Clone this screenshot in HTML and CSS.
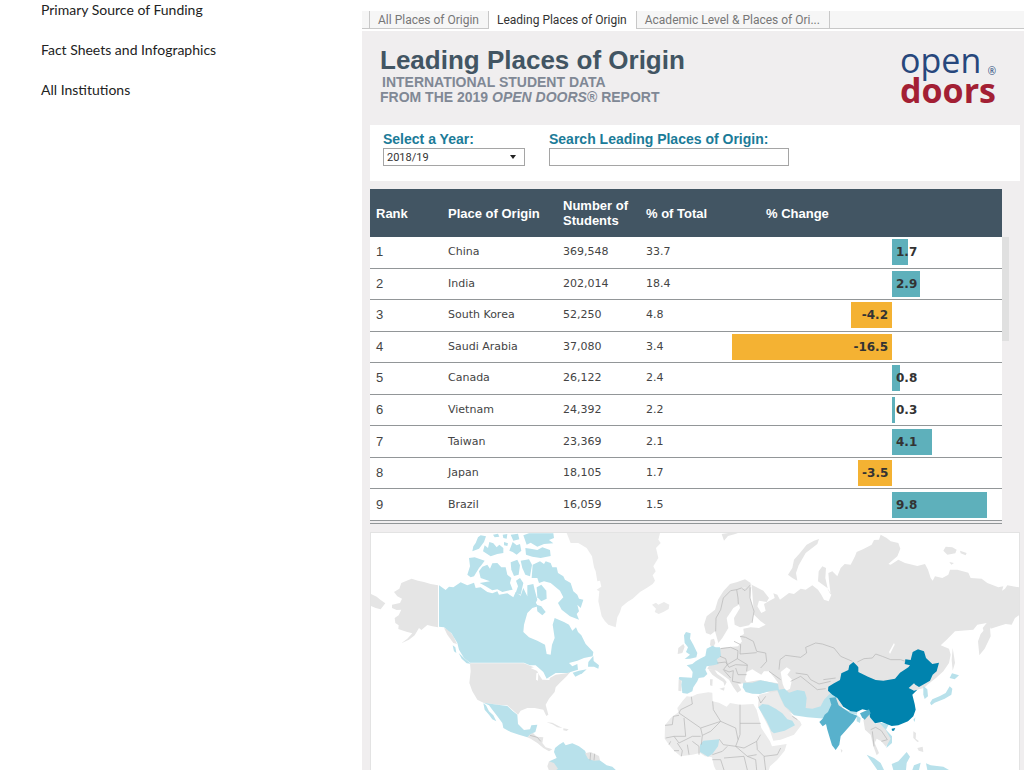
FILE: index.html
```html
<!DOCTYPE html>
<html lang="en">
<head>
    <meta charset="UTF-8">
    <meta name="viewport" content="width=device-width, initial-scale=1.0">
    <title>Leading Places of Origin</title>
    <link rel="stylesheet" href="styles.css">
</head>
<body>
    <div class="page">
        <nav class="sidebar">
            <a href="#">Primary Source of Funding</a>
            <a href="#">Fact Sheets and Infographics</a>
            <a href="#">All Institutions</a>
        </nav>

        <main class="dashboard">
            <div class="tabs">
                <button class="tab" type="button">All Places of Origin</button>
                <button class="tab active" type="button">Leading Places of Origin</button>
                <button class="tab" type="button">Academic Level &amp; Places of Ori...</button>
            </div>

            <div class="panel">
                <header class="heading">
                    <div>
                        <h1>Leading Places of Origin</h1>
                        <p class="subtitle first">INTERNATIONAL STUDENT DATA</p>
                        <p class="subtitle">FROM THE 2019 <em>OPEN DOORS</em>® REPORT</p>
                    </div>
                    <div class="logo">
                        <div class="logo-open">open<span class="reg">®</span></div>
                        <div class="logo-doors">doors</div>
                    </div>
                </header>

                <form class="filters">
                    <div class="field">
                        <label for="year">Select a Year:</label>
                        <div class="select-box">
                            <select id="year">
                                <option>2018/19</option>
                            </select>
                        </div>
                    </div>
                    <div class="field search">
                        <label for="search">Search Leading Places of Origin:</label>
                        <input id="search" type="text">
                    </div>
                </form>

                <div class="table-area">
                    <table>
                        <thead>
                            <tr>
                                <th class="rank">Rank</th>
                                <th class="place">Place of Origin</th>
                                <th class="number">Number of Students</th>
                                <th class="total">% of Total</th>
                                <th class="change">% Change</th>
                            </tr>
                        </thead>
                        <tbody>
                            <tr><td class="rank">1</td><td>China</td><td>369,548</td><td>33.7</td><td class="change"><div class="bar" style="--value: 1.7"><span>1.7</span></div></td></tr>
                            <tr><td class="rank">2</td><td>India</td><td>202,014</td><td>18.4</td><td class="change"><div class="bar" style="--value: 2.9"><span>2.9</span></div></td></tr>
                            <tr><td class="rank">3</td><td>South Korea</td><td>52,250</td><td>4.8</td><td class="change"><div class="bar down" style="--value: 4.2"><span>-4.2</span></div></td></tr>
                            <tr><td class="rank">4</td><td>Saudi Arabia</td><td>37,080</td><td>3.4</td><td class="change"><div class="bar down" style="--value: 16.5"><span>-16.5</span></div></td></tr>
                            <tr><td class="rank">5</td><td>Canada</td><td>26,122</td><td>2.4</td><td class="change"><div class="bar" style="--value: 0.8"><span>0.8</span></div></td></tr>
                            <tr><td class="rank">6</td><td>Vietnam</td><td>24,392</td><td>2.2</td><td class="change"><div class="bar" style="--value: 0.3"><span>0.3</span></div></td></tr>
                            <tr><td class="rank">7</td><td>Taiwan</td><td>23,369</td><td>2.1</td><td class="change"><div class="bar" style="--value: 4.1"><span>4.1</span></div></td></tr>
                            <tr><td class="rank">8</td><td>Japan</td><td>18,105</td><td>1.7</td><td class="change"><div class="bar down" style="--value: 3.5"><span>-3.5</span></div></td></tr>
                            <tr><td class="rank">9</td><td>Brazil</td><td>16,059</td><td>1.5</td><td class="change"><div class="bar" style="--value: 9.8"><span>9.8</span></div></td></tr>
                        </tbody>
                    </table>
                    <div class="scroll-track"><div class="scroll-thumb"></div></div>
                </div>

                <div class="map">
                    <svg viewBox="21 15 1944 711" role="img" aria-label="World map of places of origin">
                        <!-- North America -->
                        <g class="land">
                            <path d="M222,172 L200,168 180,162 162,158 143,152 128,158 112,165 106,182 90,192 100,205 114,212 108,225 84,230 84,240 98,246 112,245 104,262 92,270 94,285 104,292 103,303 118,308 130,312 145,316 130,332 112,346 135,335 152,322 165,300 172,306 190,291 205,295 222,298Z"/>
                            <path d="M240,300 L255,306 268,325 279,348 268,345 250,320Z"/>
                            <path d="M21,198 L38,206 50,216 64,226 50,244 35,240 21,234Z"/>
                            <path d="M318,406 L480,406 500,414 515,420 525,440 535,455 548,455 575,440 608,436 622,428 608,445 590,462 575,478 572,492 555,512 545,530 553,560 547,564 538,545 512,540 490,540 470,548 462,560 445,545 430,532 400,530 358,524 340,515 325,490 316,465 320,430Z"/>
                            <path d="M490,628 L505,613 518,626 538,628 535,645 545,658 565,664 555,670 538,660 520,645 500,632Z"/>
                            <path d="M548,583 L565,584 595,600 580,598 565,589Z"/>
                            <path d="M598,601 L614,604 608,609 598,607Z"/>
                        </g>
                        <g class="light">
                            <path d="M225,172 L245,186 255,176 268,178 290,163 310,172 330,164 335,180 350,178 370,192 385,196 400,190 405,200 430,196 448,208 455,192 470,203 478,180 490,205 505,200 510,215 522,235 505,240 490,255 480,290 478,312 495,328 520,338 543,350 548,378 560,380 564,350 572,330 566,290 572,270 600,282 615,290 625,308 636,298 642,312 652,322 665,348 688,372 686,385 660,390 640,398 615,405 625,415 640,408 642,425 610,435 575,435 548,452 538,432 515,412 498,412 480,404 318,404 300,390 285,365 280,345 262,315 240,298 225,296Z"/>
                            <path d="M673,402 L688,384 689,399 705,412 703,422 690,416 672,416Z"/>
                            <path d="M626,434 L645,428 668,424 655,436 634,446Z"/>
                            <path d="M284,375 L300,390 320,407 308,406 293,392Z"/>
                            <path d="M266,352 L274,358 277,375 270,370Z"/>
                            <path d="M506,110 L528,100 540,108 545,100 560,105 565,118 578,118 582,135 598,145 603,155 620,165 628,190 640,200 645,212 658,215 650,240 640,230 645,250 638,258 645,275 618,265 593,245 582,225 598,208 588,188 560,165 540,160 525,165 520,150 503,150Z"/>
                            <path d="M518,178 L532,170 547,188 548,212 532,220 520,208Z"/>
                            <path d="M490,172 L508,168 512,185 520,215 510,235 500,215 490,210Z"/>
                            <path d="M518,230 L532,235 545,252 535,262 520,250Z"/>
                            <path d="M345,130 L355,116 370,110 378,122 385,106 400,105 412,118 425,118 430,140 442,150 438,165 446,185 430,188 415,192 400,184 385,187 365,175 347,165 378,160 350,150Z"/>
                            <path d="M315,90 L332,88 345,92 362,98 352,112 345,120 330,145 320,148 310,140 318,115Z"/>
                            <path d="M325,70 L328,55 335,45 342,28 350,22 366,25 360,42 345,62Z"/>
                            <path d="M357,70 L362,52 372,60 376,42 388,46 398,58 406,50 418,60 418,75 400,78 380,85Z"/>
                            <path d="M387,20 L402,17 406,26 392,28Z M416,20 L430,18 428,32 418,30Z M440,20 L462,17 466,34 448,38Z M420,42 L432,46 430,54 420,52Z"/>
                            <path d="M436,68 L446,42 458,52 468,48 472,68 458,80 446,72Z"/>
                            <path d="M440,103 L460,95 468,112 464,140 450,144 442,125Z"/>
                            <path d="M470,98 L495,94 504,110 498,145 484,140 475,120Z"/>
                            <path d="M456,158 L468,150 478,165 470,200 455,195 462,175Z"/>
                            <path d="M484,60 L500,62 520,66 535,58 558,66 560,84 530,90 505,86 486,80Z"/>
                            <path d="M478,22 L495,16 568,16 570,30 555,36 568,46 540,48 520,56 500,44 488,50Z"/>
                            <path d="M358,524 L400,530 430,534 445,548 460,560 462,588 480,606 498,604 502,592 520,590 514,612 500,618 490,628 465,620 440,612 418,600 415,585 400,565 385,545 375,532Z"/>
                            <path d="M358,526 L366,532 375,550 388,562 397,580 385,574 375,560 362,545Z"/>
                            <path d="M573,660 L585,650 598,642 605,652 625,646 645,655 663,668 670,685 705,695 728,712 745,716 770,740 555,740 562,712 556,700 578,690 570,672Z"/>
                        </g>
                        <g class="water">
                            <path d="M500,420 L515,416 530,430 518,428Z M517,436 L523,434 522,458 516,455Z M528,432 L538,440 536,450Z M540,456 L558,450 556,456Z"/>
                        </g>
                        <path class="land" d="M663,676 L680,672 705,684 708,697 690,698 672,692Z M555,700 L570,705 582,722 560,740 550,715Z"/>

                        <!-- Greenland and the North Atlantic -->
                        <g class="pale">
                            <path d="M608,15 L888,15 883,35 890,45 876,60 883,90 868,115 875,130 866,142 873,158 866,168 848,180 828,192 806,212 790,222 773,236 768,252 760,268 755,298 733,290 722,278 713,265 703,220 706,190 698,185 712,176 708,158 700,160 695,130 690,118 684,85 668,60 643,45 620,45Z"/>
                            <path d="M864,230 L876,224 883,230 900,222 916,230 914,243 898,252 884,258 872,252 876,242Z"/>
                        </g>

                        <!-- Russia, Eastern Europe and Central Asia -->
                        <g class="land">
                            <path d="M1163,170 L1198,188 1215,210 1208,222 1185,218 1180,235 1192,255 1205,248 1200,228 1210,222 1232,210 1228,196 1240,200 1248,215 1275,195 1290,198 1310,182 1325,185 1345,172 1362,185 1372,200 1380,215 1394,220 1402,200 1390,180 1362,160 1364,130 1375,115 1386,120 1384,150 1392,185 1400,200 1395,158 1393,135 1405,130 1420,145 1430,120 1442,108 1460,110 1473,85 1478,72 1500,62 1523,50 1530,36 1545,35 1550,20 1568,30 1580,40 1603,45 1609,62 1600,85 1573,108 1580,110 1603,95 1623,105 1660,114 1683,108 1692,125 1700,150 1706,158 1713,145 1735,150 1753,140 1758,125 1780,125 1813,134 1820,150 1853,152 1870,165 1903,178 1918,175 1914,188 1923,182 1930,172 1965,178 1965,262 1953,270 1943,290 1925,288 1903,295 1880,302 1876,292 1860,312 1856,300 1868,285 1840,290 1828,305 1773,310 1748,335 1730,352 1755,362 1760,380 1755,405 1738,430 1716,450 1690,470 1680,480 1600,500 1473,530 1380,550 1340,562 1290,560 1255,540 1240,500 1163,480 1140,466 1122,468 1132,486 1120,494 1108,478 1095,455 1075,440 1058,428 1030,422 1040,405 1068,360 1090,358 1122,355 1134,340 1128,325 1140,318 1138,302 1160,298 1185,300 1205,290 1190,280 1170,260Z"/>
                            <path d="M1020,290 L1028,265 1053,245 1062,215 1078,190 1098,168 1120,162 1143,154 1160,165 1158,178 1132,180 1122,210 1128,228 1108,240 1088,270 1093,300 1075,330 1063,345 1053,310 1040,320 1026,315Z"/>
                            <path d="M1118,205 L1120,182 1143,180 1155,168 1162,178 1158,210 1170,250 1165,280 1155,292 1128,298 1112,290 1110,270 1128,240Z"/>
                            <path d="M1038,352 L1040,335 1050,332 1054,345 1048,358Z"/>
                            <path d="M1365,33 L1350,38 1328,50 1308,75 1290,95 1285,120 1272,140 1285,150 1300,158 1296,135 1304,112 1325,75 1360,48Z"/>
                            <path d="M1738,68 L1745,56 1765,58 1778,65 1774,76 1750,80Z M1788,68 L1808,75 1805,82 1790,76Z M1756,102 L1770,105 1762,110Z"/>
                            <path d="M1884,275 L1878,300 1880,325 1862,362 1846,382 1842,340 1850,318 1870,295Z"/>
                            <path d="M1766,360 L1770,385 1773,405 1766,428 1763,395Z"/>
                            <path d="M1033,424 L1050,424 1060,438 1080,452 1088,462 1082,474 1078,462 1062,452 1045,440Z"/>
                            <path d="M1066,482 L1082,478 1080,488Z M1038,454 L1046,454 1045,474 1038,472Z"/>
                            <path d="M943,360 L958,348 962,356 955,375 941,378Z M944,455 L953,456 952,490 943,488Z"/>
                            <path d="M1073,18 L1100,14 1122,16 1092,24 1080,38Z"/>
                        </g>

                        <!-- Africa and the Middle East -->
                        <g class="pale">
                            <path d="M943,553 L940,540 955,520 968,505 982,506 1000,498 1033,493 1045,494 1046,520 1065,524 1088,536 1098,525 1128,530 1168,528 1178,545 1183,565 1192,600 1218,640 1224,655 1268,648 1262,668 1240,695 1218,715 1210,740 1063,740 1050,715 1044,688 1023,685 1008,675 985,680 950,685 930,668 915,650 902,632 903,592 920,570Z"/>
                            <path d="M1185,500 L1240,490 1258,530 1285,562 1308,580 1313,590 1290,620 1250,635 1228,638 1215,600 1182,535Z"/>
                        </g>
                        <g class="water">
                            <path d="M1143,455 L1148,432 1165,424 1178,432 1192,440 1200,430 1215,430 1230,448 1243,466 1215,462 1185,456 1148,463Z"/>
                            <path d="M1250,432 L1268,418 1280,426 1270,440 1284,455 1278,482 1265,490 1256,468Z"/>
                            <path d="M1575,372 L1590,345 1592,350 1578,378Z"/>
                        </g>
                        <g class="light">
                            <path d="M960,322 L966,312 980,316 978,332 988,350 1000,375 997,388 978,392 962,393 978,380 966,372 972,358 962,345Z"/>
                            <path d="M968,412 L985,408 995,400 1008,392 1024,384 1028,362 1045,353 1055,358 1068,358 1071,385 1058,394 1064,408 1048,412 1028,415 1024,425 1030,438 1020,448 1004,450 1000,460 988,478 985,490 970,497 955,495 952,470 954,458 944,454 946,447 984,449 986,432 978,420Z"/>
                            <path d="M1138,464 L1165,464 1190,457 1220,463 1242,468 1245,486 1215,490 1188,498 1165,497 1145,492 1136,478Z"/>
                            <path d="M1240,486 L1262,482 1275,494 1300,486 1322,490 1328,510 1325,540 1345,542 1370,535 1380,515 1400,495 1420,508 1402,530 1400,552 1385,572 1330,568 1290,562 1275,545 1262,535 1250,510Z"/>
                            <path d="M1183,538 L1195,528 1213,530 1235,542 1255,556 1270,574 1285,578 1293,592 1262,608 1230,616 1222,610 1208,580Z"/>
                            <path d="M1008,650 L1018,638 1066,634 1062,655 1045,678 1032,686 1022,680 1008,672Z"/>
                            <path d="M1425,535 L1452,548 1480,552 1478,560 1440,552Z M1478,562 L1490,570 1488,585 1478,580Z"/>
                            <path d="M1678,474 L1690,484 1692,505 1682,513 1678,500Z"/>
                            <path d="M1698,525 L1705,514 1728,504 1745,495 1757,475 1765,482 1762,500 1742,512 1712,524 1702,532Z M1757,450 L1764,436 1785,442 1772,454Z"/>
                            <path d="M1546,584 L1575,588 1566,605 1584,625 1584,645 1567,660 1572,638 1555,602Z"/>
                            <path d="M1508,680 L1530,690 1550,705 1560,726 1540,726Z M1583,708 L1603,700 1628,672 1638,686 1628,705 1626,726 1588,726Z M1650,712 L1670,704 1665,726 1645,726Z M1686,706 L1700,712 1738,716 1755,726 1690,726Z"/>
                            <path d="M1648,575 L1654,568 1652,582Z"/>
                        </g>
                        <g class="land">
                            <path d="M1498,575 L1515,560 1533,587 1546,584 1565,605 1580,632 1566,656 1552,640 1538,632 1532,645 1545,675 1538,682 1528,655 1520,620 1503,605Z"/>
                            <path d="M1648,610 L1656,615 1655,632 1665,640 1660,642 1648,630Z M1660,660 L1676,656 1678,672 1664,668Z M1430,662 L1436,668 1432,674Z"/>
                        </g>
                        <path class="china" d="M1393,476 L1410,466 1428,456 1432,436 1453,426 1456,412 1468,402 1478,412 1483,418 1483,432 1512,446 1535,456 1558,458 1593,452 1608,434 1633,418 1638,412 1622,408 1624,394 1640,396 1646,372 1662,364 1680,370 1686,390 1705,408 1725,404 1718,430 1706,440 1698,458 1665,477 1654,470 1650,466 1634,480 1650,488 1660,485 1645,500 1652,528 1655,545 1648,565 1632,580 1603,592 1583,594 1553,582 1533,586 1518,568 1515,548 1495,544 1478,552 1460,550 1438,536 1420,510 1405,500 1392,488Z"/>
                        <path class="china" d="M1583,602 L1594,600 1590,608 1584,608Z"/>
                        <path class="india" d="M1396,510 L1415,508 1424,532 1458,555 1480,563 1470,580 1452,600 1430,625 1426,650 1415,666 1404,652 1390,605 1386,588 1376,595 1366,582 1376,572 1382,560 1392,552 1402,530Z"/>
                        <path class="india" d="M1488,556 L1515,544 1520,556 1502,575 1494,568Z"/>

                        <!-- Country borders -->
                        <g class="borders">
                            <path d="M1055,310 L1056,270 1070,245 1078,210 1100,188 1118,185 1122,210 1123,228 M1118,185 L1132,180 1143,188 1160,170 M1158,178 L1158,210 1170,250 1164,285"/>
                            <path d="M1128,325 L1145,328 1168,340 1178,370 1205,375 1208,400 1190,420 M1110,340 L1130,350 1128,378 1178,374 M1070,362 L1100,358 1122,368 1120,392 1150,410 1148,430 M1068,385 L1085,392 1090,410 1120,392 M1060,405 L1085,402 1095,418 1115,410 1150,412 M1080,425 L1095,432 1108,428 1105,460 1130,465 M1090,410 L1078,425 1100,450 M1115,420 L1122,440 1148,440"/>
                            <path d="M1245,425 L1248,395 1265,382 1310,388 1328,375 1325,358 1355,345 1375,348 1410,360 1430,385 1465,400 M1295,435 L1330,440 1340,455 1365,468 1400,460 M1280,460 L1310,445 1360,485 1385,482 M1378,455 L1415,450"/>
                            <path d="M1480,402 L1500,392 1525,390 1535,378 1555,385 1580,395 1610,395 1624,400 M1215,430 L1250,455 M1182,505 L1190,525 1205,505 M1285,565 L1300,575"/>
                            <path d="M982,506 L985,528 950,545 945,555 1010,600 M960,570 L965,625 930,625 M903,592 L925,590 928,565 945,562 M1046,520 L1048,545 1070,580 1010,600 M1010,600 L1015,622 1040,610 1070,580 M1128,530 L1128,620 1115,655 M1070,580 L1115,600 1122,635 M1128,586 L1190,586 M905,630 L930,625 945,645 985,625 1010,625 M940,645 L955,668 952,685 M970,650 L975,680 M985,640 L1005,655 1005,680 M1015,622 L1012,650 M1066,634 L1078,650 1115,655 1140,660 1178,640 1190,620 M1045,680 L1075,670 1090,655 M1115,655 L1150,685 1178,680 M1178,640 L1180,665 1200,685 1240,680 1250,660 M1045,695 L1070,695 1080,726 M1080,690 L1140,685 1150,726 M1150,685 L1175,695 1178,726 M1200,685 L1205,726 M920,640 L915,650 M945,668 L930,668"/>
                            <path d="M1520,605 L1535,598 1552,608 1570,635 1552,640 M1525,610 L1530,655 M498,622 L520,628 530,640 M680,675 L678,697 M692,677 L690,697"/>
                        </g>
                    </svg>
                </div>
            </div>
        </main>
    </div>
</body>
</html>
```

FILE: styles.css
```css
* {
    box-sizing: border-box;
}
body {
    margin: 0;
    background-color: #fff;
    color: #333;
    font-family: "Liberation Sans", Arial, sans-serif;
}
.page {
    display: flex;
    align-items: flex-start;
}
.sidebar {
    flex: 0 0 362px;
    display: flex;
    flex-direction: column;
    align-items: flex-start;
    gap: 20px;
    padding-left: 41px;
}
.sidebar a {
    color: #222;
    font-family: Lato, sans-serif;
    font-size: 14px;
    line-height: 20px;
    text-decoration: none;
}
.dashboard {
    flex: 1;
    min-width: 0;
    padding-top: 11px;
}

/* Tabs */
.tabs {
    display: flex;
    height: 18px;
    margin-bottom: 2px;
    padding-left: 7px;
    background-color: #f6f6f6;
    border-bottom: 1px solid #c8c8c8;
}
.tab {
    height: 17px;
    padding: 0 9px 0 8px;
    border: 0;
    border-right: 1px solid #c8c8c8;
    background-color: #f6f6f6;
    color: #777;
    font-family: Roboto, sans-serif;
    font-size: 12px;
    line-height: 16px;
    white-space: nowrap;
}
.tab:first-child {
    border-left: 1px solid #c8c8c8;
}
.tab.active {
    height: 18px;
    background-color: #fff;
    color: #333;
}

/* Heading */
.panel {
    padding: 0 4px 0 8px;
    background-color: #f0eeef;
}
.heading {
    display: flex;
    justify-content: space-between;
    height: 94px;
    padding: 14px 24px 0 10px;
}
h1 {
    margin: 0;
    color: #425563;
    font-size: 26px;
    line-height: 30px;
}
.subtitle {
    margin: 0;
    color: #808895;
    font-size: 14px;
    font-weight: bold;
    line-height: 15px;
}
.subtitle.first {
    padding-left: 2px;
}
.logo {
    font-family: "Open Sans", sans-serif;
    font-size: 34px;
    line-height: 30px;
}
.logo-open {
    display: flex;
    align-items: flex-end;
    justify-content: space-between;
    height: 30px;
    color: #27477c;
}
.logo-doors {
    color: #a31f34;
    font-weight: bold;
}
.reg {
    font-size: 10px;
    line-height: 8px;
}

/* Filters */
.filters {
    display: flex;
    gap: 24px;
    height: 56px;
    padding: 6px 13px 0;
    background-color: #fff;
}
.field {
    display: flex;
    flex-direction: column;
    width: 142px;
}
.field.search {
    width: 240px;
}
.field label {
    color: #1b7b98;
    font-size: 14px;
    font-weight: bold;
    line-height: 17px;
    white-space: nowrap;
}
.field input,
.field select {
    width: 100%;
    height: 18px;
    margin: 0;
    padding: 0 3px;
    border: 1px solid #a5a5a5;
    border-radius: 0;
    background-color: #fff;
    color: #333;
    font-family: Roboto, sans-serif;
    font-size: 11px;
}
.field select {
    appearance: none;
    display: block;
}
.select-box {
    position: relative;
}
.select-box::after {
    content: "";
    position: absolute;
    top: 7px;
    right: 9px;
    border: 3px solid transparent;
    border-top: 4px solid #222;
    border-bottom: 0;
    pointer-events: none;
}

/* Table */
.table-area {
    display: flex;
    height: 335px;
    margin: 8px 18px 8px 0;
    border-bottom: 1px solid #929698;
}
table {
    flex: 1;
    height: 332px;
    border-collapse: separate;
    border-spacing: 0;
    table-layout: fixed;
    background-color: #fff;
}
th {
    height: 48px;
    padding: 0 6px;
    background-color: #425563;
    color: #fff;
    font-size: 13px;
    line-height: 15px;
    text-align: left;
}
td {
    padding: 0 6px;
    border-bottom: 1px solid #929698;
    color: #444;
    font-family: "DejaVu Sans", Verdana, sans-serif;
    font-size: 11px;
    line-height: 14px;
}
td.rank {
    font-family: "Liberation Sans", Arial, sans-serif;
    font-size: 13px;
}
th.rank {
    width: 72px;
}
th.place {
    width: 115px;
}
th.number {
    width: 83px;
}
th.total {
    width: 88px;
}
th.change {
    padding-left: 38px;
}
td.change {
    padding: 0 0 0 164px;
}
.bar {
    width: calc(var(--value) * 9.7px);
    height: 26px;
    background-color: #5eb0bb;
    color: #333;
    font-size: 12px;
    font-weight: bold;
    line-height: 26px;
    white-space: nowrap;
}
.bar span {
    margin: 0 4px;
}
.bar.down {
    margin-left: calc(var(--value) * -9.7px);
    background-color: #f4b233;
    text-align: right;
}
.scroll-track {
    width: 7px;
    margin-right: -7px;
    padding-top: 48px;
}
.scroll-thumb {
    height: 104px;
    background-color: #e0e0e0;
}

/* Map */
.map {
    border: 1px solid #e3e3e3;
    border-bottom: 0;
    background-color: #fff;
}
.map svg {
    display: block;
    width: 100%;
}
.land {
    fill: #e5e5e5;
}
.pale {
    fill: #ebebeb;
}
.light {
    fill: #b8e1eb;
}
.china {
    fill: #0083ae;
}
.india {
    fill: #58b1cc;
}
.water {
    fill: #fff;
}
.borders {
    fill: none;
    stroke: #b3b3b3;
    stroke-width: 2;
    stroke-linejoin: round;
}
```
